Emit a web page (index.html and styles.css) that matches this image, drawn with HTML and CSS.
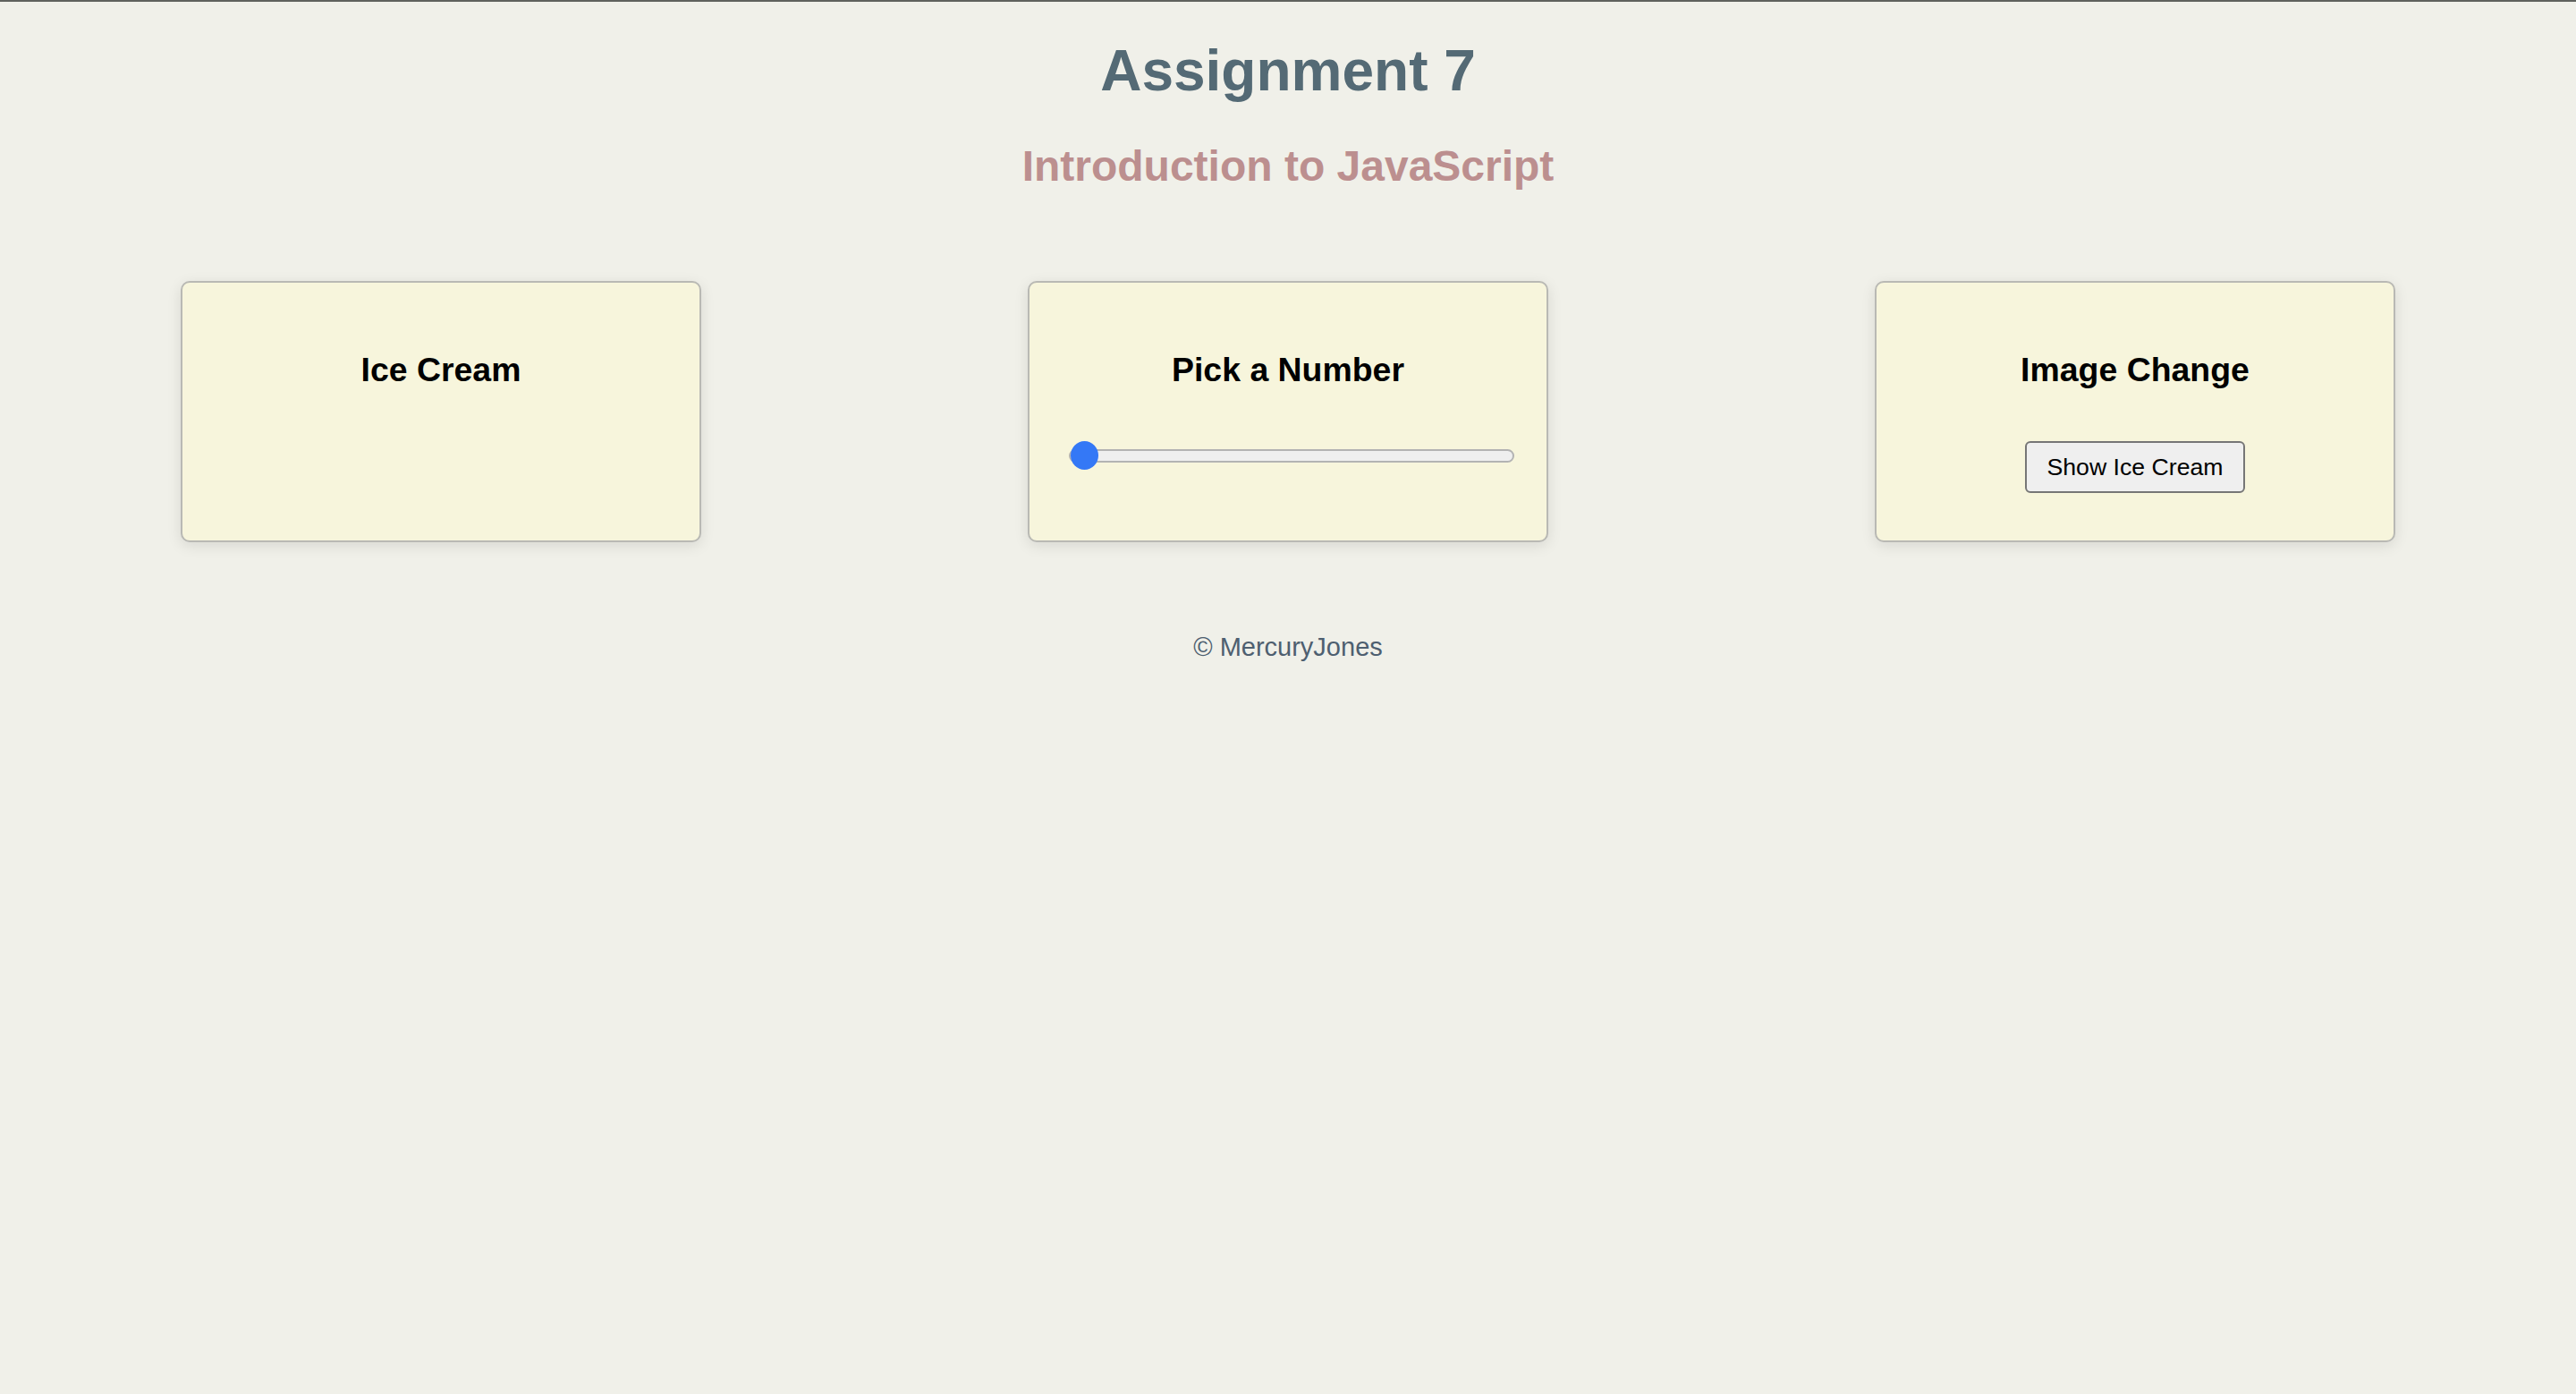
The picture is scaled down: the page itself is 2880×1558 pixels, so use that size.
FILE: index.html
```html
<!DOCTYPE html>
<html lang="en">
<head>
<meta charset="utf-8">
<title>Assignment 7</title>
<link rel="stylesheet" href="styles.css">
</head>
<body>
<header class="page-header">
  <h1 class="title">Assignment 7</h1>
  <h2 class="subtitle">Introduction to JavaScript</h2>
</header>
<main class="cards">
  <section class="card">
    <h3 class="card-title">Ice Cream</h3>
  </section>
  <section class="card">
    <h3 class="card-title">Pick a Number</h3>
    <input class="slider" type="range" min="0" max="100" value="0">
  </section>
  <section class="card">
    <h3 class="card-title">Image Change</h3>
    <button class="btn" type="button">Show Ice Cream</button>
  </section>
</main>
<footer class="footer">© MercuryJones</footer>
</body>
</html>
```
FILE: styles.css
```css
html {
  background: #f0f0e9;
}
body {
  margin: 0;
  border-top: 2px solid #5f615d;
  background: #f0f0e9;
  font-family: "Liberation Sans", Arial, sans-serif;
}
.page-header {
  text-align: center;
}
.title {
  margin: 40px 0 0;
  font-size: 64px;
  line-height: 74px;
  font-weight: bold;
  color: #546a75;
}
.subtitle {
  margin: 42px 0 0;
  font-size: 48px;
  line-height: 55px;
  font-weight: bold;
  color: #bc8f8f;
}
.cards {
  display: flex;
  justify-content: space-around;
  padding: 0 19.5px;
  margin-top: 101px;
}
.card {
  box-sizing: border-box;
  width: 582px;
  height: 292px;
  padding: 40px 40px 0;
  border: 2px solid #b9b9b4;
  border-radius: 10px;
  background: #f7f5dc;
  box-shadow: 0 4px 16px rgba(0, 0, 0, 0.1);
  display: flex;
  flex-direction: column;
  align-items: center;
}
.card-title {
  margin: 36px 0 0;
  font-size: 37.44px;
  line-height: 43px;
  font-weight: bold;
  color: #000;
}
.slider {
  -webkit-appearance: none;
  appearance: none;
  align-self: flex-start;
  width: 498px;
  height: 32px;
  margin: 58px 0 0 4px;
  padding: 0;
  background: transparent;
}
.slider::-webkit-slider-runnable-track {
  box-sizing: border-box;
  height: 15px;
  background: #efefef;
  border: 2px solid #b3b3b3;
  border-radius: 8px;
}
.slider::-webkit-slider-thumb {
  -webkit-appearance: none;
  appearance: none;
  width: 31px;
  height: 32px;
  margin-top: -10.5px;
  border: none;
  border-radius: 50%;
  background: #3478f6;
}
.btn {
  margin-top: 58px;
  padding: 11.5px 22px;
  font-family: "Liberation Sans", Arial, sans-serif;
  font-size: 26.67px;
  line-height: 31px;
  color: #000;
  background: #efefef;
  border: 2px solid #767676;
  border-radius: 6px;
}
.footer {
  margin-top: 101px;
  text-align: center;
  font-size: 29px;
  line-height: 33px;
  color: #4e5f70;
}
```
